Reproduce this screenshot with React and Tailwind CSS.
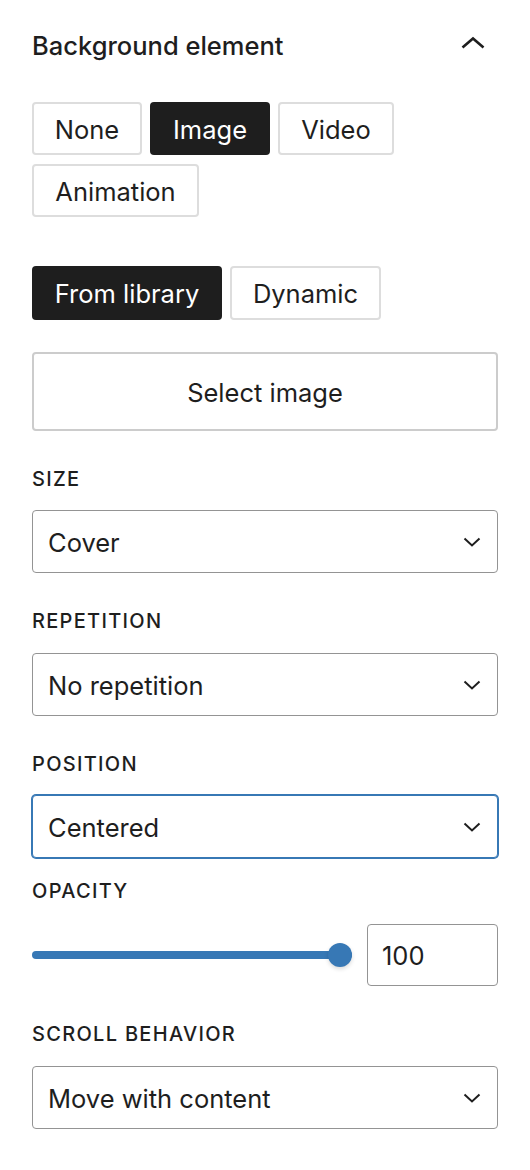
import React from 'react';

const Chevron = ({ up }) => (
    <svg width="18" height="10" viewBox="0 0 18 10" fill="none">
        <path
            d={up ? 'M1.5 8.5 L9 1.5 L16.5 8.5' : 'M1.5 1.5 L9 8.5 L16.5 1.5'}
            stroke="#1e1e1e"
            strokeWidth="2"
        />
    </svg>
);

const Label = ({ children, className = '' }) => (
    <div className={`text-[20px] leading-[24px] font-medium uppercase tracking-[0.065em] text-[#1e1e1e] ${className}`}>
        {children}
    </div>
);

const SelectBox = ({ value, focused }) => (
    <div
        className={`flex items-center justify-between h-[63px] pl-[15px] pr-[16px] rounded-[4px] border bg-white ${
            focused ? 'border-[#3778b5] shadow-[0_0_0_1px_#3778b5]' : 'border-[#949494]'
        }`}
    >
        <span className="text-[25.5px] text-[#1e1e1e] pt-[3px]">{value}</span>
        <Chevron />
    </div>
);

const Toggle = ({ label, active, width }) => (
    <button
        className={`${width} h-[53px] pt-[3px] rounded-[4px] text-[25.5px] flex items-center justify-center ${
            active ? 'bg-[#1e1e1e] text-white' : 'bg-white text-[#1e1e1e] border-2 border-[#dddddd]'
        }`}
    >
        {label}
    </button>
);

export default function App() {
    return (
        <div className="w-[530px] min-h-[1170px] bg-white px-[32px] pt-[24px] font-['Inter','Liberation_Sans',sans-serif] text-[#1e1e1e]">
            {/* Header */}
            <div className="flex items-center justify-between h-[44px]">
                <h2 className="text-[25.5px] font-medium leading-none">Background element</h2>
                <span className="mr-[12px] -mt-[6px]">
                    <svg width="26" height="14" viewBox="0 0 26 14" fill="none">
                        <path d="M2.5 11.5 L13 2.5 L23.5 11.5" stroke="#1e1e1e" strokeWidth="2.6" />
                    </svg>
                </span>
            </div>

            {/* Element type */}
            <div className="mt-[34px] flex flex-wrap gap-x-[8px] gap-y-[9px]">
                <Toggle label="None" width="w-[110px]" />
                <Toggle label="Image" width="w-[120px]" active />
                <Toggle label="Video" width="w-[116px]" />
                <Toggle label="Animation" width="w-[167px]" />
            </div>

            {/* Source */}
            <div className="mt-[49px] flex gap-[8px]">
                <button className="w-[190px] h-[54px] pt-[3px] rounded-[4px] bg-[#1e1e1e] text-white text-[25.5px]">
                    From library
                </button>
                <button className="w-[151px] h-[54px] pt-[3px] rounded-[4px] border-2 border-[#dddddd] bg-white text-[25.5px]">
                    Dynamic
                </button>
            </div>

            <button className="mt-[32px] w-full h-[79px] pt-[3px] rounded-[4px] border-2 border-[#cccccc] bg-white text-[25.5px]">
                Select image
            </button>

            <Label className="mt-[36px]">Size</Label>
            <div className="mt-[19px]">
                <SelectBox value="Cover" />
            </div>

            <Label className="mt-[36px]">Repetition</Label>
            <div className="mt-[20px]">
                <SelectBox value="No repetition" />
            </div>

            <Label className="mt-[36px]">Position</Label>
            <div className="mt-[19px]">
                <SelectBox value="Centered" focused />
            </div>

            <Label className="mt-[21px]">Opacity</Label>
            <div className="mt-[21px] flex items-center gap-[15px]">
                <div className="relative flex-1 h-[24px] flex items-center">
                    <div className="w-full h-[8px] rounded-full bg-[#3778b5]" />
                    <div className="absolute right-0 top-0 w-[24px] h-[24px] rounded-full bg-[#3778b5] shadow-[0_2px_4px_rgba(0,0,0,0.15)]" />
                </div>
                <div className="w-[131px] h-[62px] pt-[3px] rounded-[4px] border border-[#949494] flex items-center pl-[14px] text-[25.5px]">
                    100
                </div>
            </div>

            <Label className="mt-[36px]">Scroll behavior</Label>
            <div className="mt-[20px]">
                <SelectBox value="Move with content" />
            </div>
        </div>
    );
}
